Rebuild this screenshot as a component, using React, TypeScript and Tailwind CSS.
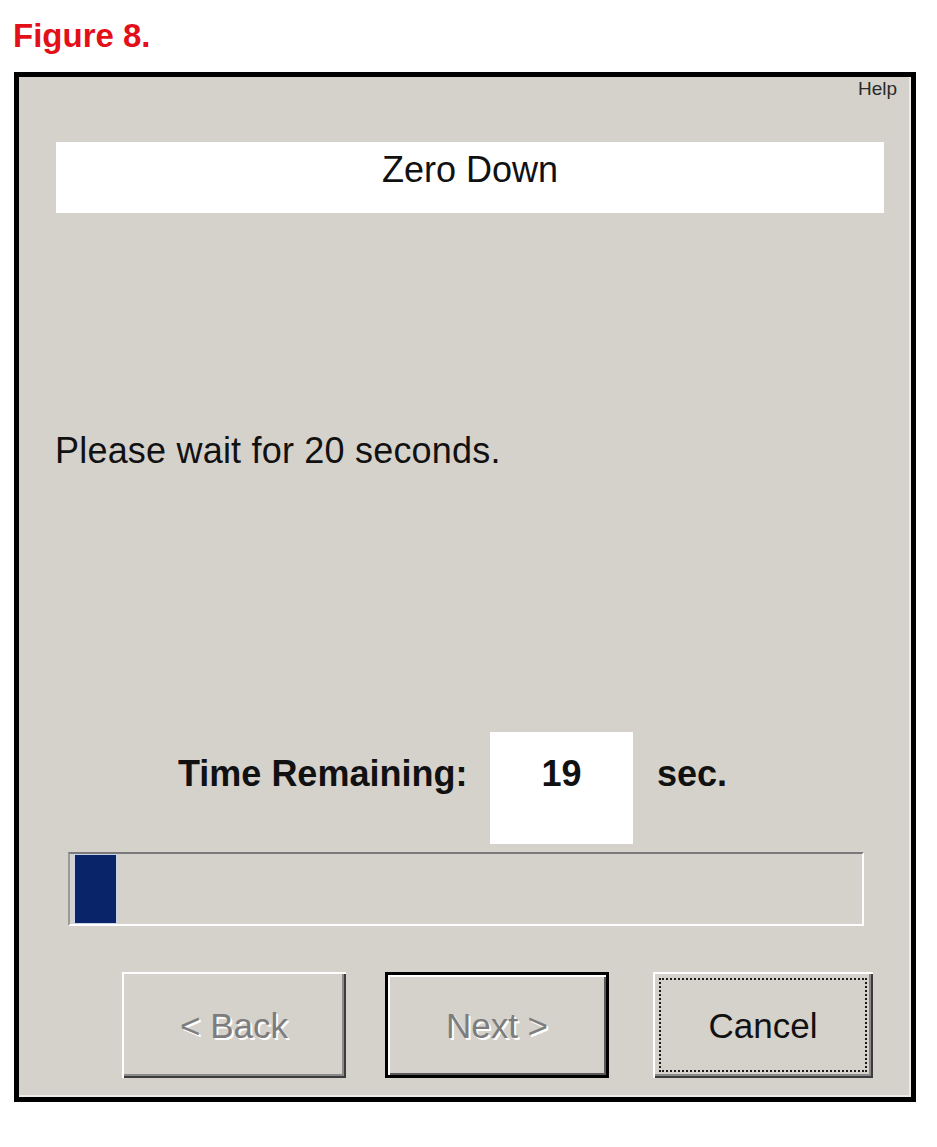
export default function App() {
  return (
    <div className="min-h-[1147px] w-[937px] bg-white pt-[21px] font-['Liberation_Sans',Arial,sans-serif]">
      <div className="pl-[13px] text-[33px] leading-[30px] font-bold text-[#e3101a]">Figure 8.</div>
      <div className="ml-[14px] mt-[21px] h-[1030px] w-[902px] border-[5px] border-black bg-[#d5d1cb] flex flex-col shadow-[inset_-2px_-2px_0_#ecebe7]">
        {/* Help */}
        <div className="pt-[2px] pr-[14px] flex justify-end">
          <span className="text-[19px] leading-[19px] text-[#2a2a2a]">Help</span>
        </div>

        {/* Title */}
        <div className="mt-[44px] ml-[37px] w-[828px] h-[71px] bg-white pt-[10px] text-center text-[36px] leading-[36px] text-[#111]">
          Zero Down
        </div>

        {/* Message */}
        <div className="mt-[220px] pl-[36px] text-[36px] leading-[36px] text-[#111] tracking-[0.2px]">
          Please wait for 20 seconds.
        </div>

        {/* Time remaining row */}
        <div className="mt-[263px] pl-[159px] flex items-start text-[36px] leading-[36px] font-bold text-[#111]">
          <div className="w-[312px] pt-[24px]">Time Remaining:</div>
          <div className="w-[143px] h-[112px] bg-white pt-[24px] text-center">19</div>
          <div className="ml-[24px] pt-[24px]">sec.</div>
        </div>

        {/* Progress bar */}
        <div className="mt-[8px] ml-[49px] w-[796px] h-[74px] border-t-2 border-l-2 border-b-2 border-r-2 border-t-[#7a7a7a] border-l-[#9a9a9a] border-b-white border-r-white pt-[1px] pb-[1px] pl-[5px] flex">
          <div className="w-[41px] h-full bg-[#0a246a] ring-1 ring-[#c9d2e6]" />
        </div>

        {/* Buttons */}
        <div className="mt-[46px] pl-[103px] flex items-start text-[35px] leading-[35px]">
          <div className="w-[224px] h-[106px] flex items-center justify-center bg-[#d5d1cb] shadow-[inset_2px_2px_0_#ffffff,inset_-2px_-2px_0_#3c3c3c,inset_-4px_-4px_0_#8a8a8a] text-[#7d7d7d] [text-shadow:2px_2px_0_#ffffff]">
            &lt; Back
          </div>
          <div className="ml-[39px] w-[224px] h-[106px] border-[3px] border-black flex items-center justify-center bg-[#d5d1cb] shadow-[inset_2px_2px_0_#ffffff,inset_-2px_-2px_0_#5a5a5a] text-[#7d7d7d] [text-shadow:2px_2px_0_#ffffff]">
            Next &gt;
          </div>
          <div className="ml-[44px] w-[220px] h-[106px] flex items-center justify-center bg-[#d5d1cb] shadow-[inset_2px_2px_0_#ffffff,inset_-2px_-2px_0_#3c3c3c,inset_-4px_-4px_0_#8a8a8a] outline-2 outline-dotted outline-[#1a1a1a] outline-offset-[-8px] text-[#111]">
            Cancel
          </div>
        </div>
      </div>
    </div>
  );
}
